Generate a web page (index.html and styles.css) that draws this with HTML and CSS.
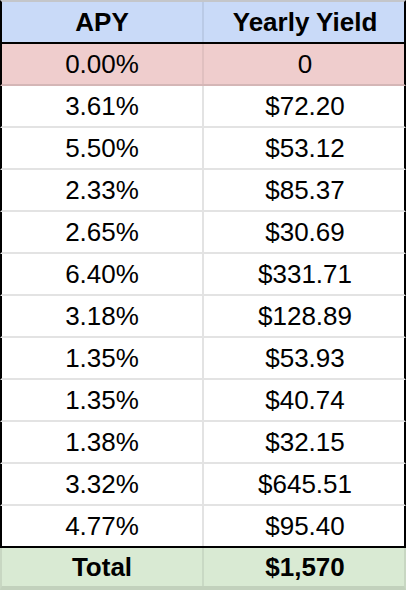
FILE: index.html
```html
<!DOCTYPE html>
<html>
<head>
<meta charset="utf-8">
<link rel="stylesheet" href="styles.css">
</head>
<body>
<div class="sheet">
  <div class="row head">
    <div class="cell">APY</div>
    <div class="cell">Yearly Yield</div>
  </div>
  <div class="row zero">
    <div class="cell">0.00%</div>
    <div class="cell">0</div>
  </div>
  <div class="row data"><div class="cell">3.61%</div><div class="cell">$72.20</div></div>
  <div class="row data"><div class="cell">5.50%</div><div class="cell">$53.12</div></div>
  <div class="row data"><div class="cell">2.33%</div><div class="cell">$85.37</div></div>
  <div class="row data"><div class="cell">2.65%</div><div class="cell">$30.69</div></div>
  <div class="row data"><div class="cell">6.40%</div><div class="cell">$331.71</div></div>
  <div class="row data"><div class="cell">3.18%</div><div class="cell">$128.89</div></div>
  <div class="row data"><div class="cell">1.35%</div><div class="cell">$53.93</div></div>
  <div class="row data"><div class="cell">1.35%</div><div class="cell">$40.74</div></div>
  <div class="row data"><div class="cell">1.38%</div><div class="cell">$32.15</div></div>
  <div class="row data"><div class="cell">3.32%</div><div class="cell">$645.51</div></div>
  <div class="row data last"><div class="cell">4.77%</div><div class="cell">$95.40</div></div>
  <div class="row total">
    <div class="cell">Total</div>
    <div class="cell">$1,570</div>
  </div>
</div>
</body>
</html>
```

FILE: styles.css
```css
* { box-sizing: border-box; }
html, body { margin: 0; padding: 0; background: #fff; }
.sheet {
  width: 406px;
  font-family: "Liberation Sans", Arial, sans-serif;
  font-size: 26px;
  color: #000;
}
.row {
  display: grid;
  grid-template-columns: 202px 202px;
  border-left: 2px solid #000;
  border-right: 2px solid #000;
  border-bottom: 2px solid rgba(0, 0, 0, 0.11);
  height: 42px;
}
.cell {
  display: flex;
  align-items: center;
  justify-content: center;
  line-height: 1;
}
.cell:first-child {
  border-right: 2px solid rgba(0, 0, 0, 0.11);
  padding-left: 0;
}
.head {
  background: #c9daf8;
  font-weight: bold;
  border-top: 2px solid #c4c6ca;
  border-bottom-color: #000;
  height: 44px;
}
.head .cell:first-child { border-right-color: rgba(0, 0, 0, 0.07); }
.zero { background: #efcdcd; }
.zero .cell:first-child { border-right-color: rgba(0, 0, 0, 0.06); }
.data { background: #fff; }
.last { border-bottom-color: #000; height: 42px; }
.total {
  background: #d9ead3;
  font-weight: bold;
  border-left-color: rgba(0, 0, 0, 0.08);
  border-right-color: rgba(0, 0, 0, 0.08);
  border-bottom: 4px solid rgba(0, 0, 0, 0.1);
  height: 42px;
}
.total .cell:first-child { border-right-color: rgba(0, 0, 0, 0.07); }
```
